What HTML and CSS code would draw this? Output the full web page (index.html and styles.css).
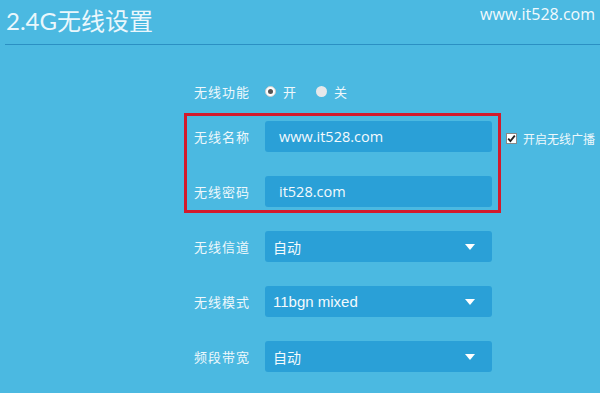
FILE: index.html
```html
<!DOCTYPE html>
<html lang="zh-CN">
<head>
  <meta charset="UTF-8">
  <title>2.4G无线设置</title>
  <link rel="stylesheet" href="styles.css">
</head>
<body>
  <div class="header">
    <h1 class="title">2.4G无线设置</h1>
    <span class="site">www.it528.com</span>
  </div>

  <div class="form">
    <!-- switch -->
    <div class="row row-switch">
      <label class="label">无线功能</label>
      <div class="radios">
        <span class="radio checked"></span><span class="radio-text">开</span>
        <span class="radio"></span><span class="radio-text">关</span>
      </div>
    </div>

    <!-- name & password, highlighted -->
    <div class="highlight-wrap">
      <div class="highlight">
        <div class="row">
          <label class="label">无线名称</label>
          <div class="field text">www.it528.com</div>
        </div>
        <div class="row">
          <label class="label">无线密码</label>
          <div class="field text">it528.com</div>
        </div>
      </div>
      <div class="broadcast">
        <span class="checkbox">
          <svg width="9" height="9" viewBox="0 0 9 9"><path d="M1.2 4.6 L3.4 7 L7.8 1.6" fill="none" stroke="#222" stroke-width="1.8"/></svg>
        </span>
        <span>开启无线广播</span>
      </div>
    </div>

    <!-- selects -->
    <div class="selects">
      <div class="row">
        <label class="label">无线信道</label>
        <div class="field select"><span>自动</span><i class="arrow"></i></div>
      </div>
      <div class="row">
        <label class="label">无线模式</label>
        <div class="field select"><span class="latin">11bgn mixed</span><i class="arrow"></i></div>
      </div>
      <div class="row">
        <label class="label">频段带宽</label>
        <div class="field select"><span>自动</span><i class="arrow"></i></div>
      </div>
    </div>
  </div>
</body>
</html>
```

FILE: styles.css
```css
/* --- Base --- */
*{box-sizing:border-box;margin:0;padding:0}
body{background:#4bb9e1;color:#eef8fc;font-family:"Noto Sans CJK SC",sans-serif;width:600px;height:393px;overflow:hidden}

/* --- Header --- */
.header{display:flex;justify-content:space-between;align-items:flex-start;height:45px;margin-left:5px;border-bottom:1px solid #2b90c3}
.title{font-family:Lato,"Noto Sans CJK SC",sans-serif;font-weight:400;font-size:24px;line-height:24px;margin:9px 0 0 1px;color:#eaf7fc}
.site{font-family:"Open Sans",sans-serif;font-size:16px;line-height:20px;margin:4px 5px 0 0;color:#f2fafd}

/* --- Form --- */
.form{margin-left:184px;padding-top:33px}
.row{display:flex;align-items:center}
.label{width:81px;padding-left:10px;font-size:13px;letter-spacing:1px;color:#eef8fc}
.field{width:227px;height:31px;border-radius:3px;background:#2aa0d7;display:flex;align-items:center;color:#f3fafd}

/* --- Radios --- */
.row-switch{height:26px}
.radios{display:flex;align-items:center;font-size:13px}
.radio{width:11px;height:11px;border-radius:50%;background:#e6e8ea;margin-right:7px}
.radio.checked{background:#fff;border:1px solid #ccc;position:relative}
.radio.checked::after{content:"";position:absolute;left:2px;top:2px;width:5px;height:5px;border-radius:50%;background:#555}
.radio-text{margin-right:20px}

/* --- Highlighted block --- */
.highlight-wrap{display:flex;align-items:flex-start;margin-top:9px}
.highlight{width:317px;height:100px;border:3px solid #d31a2c;padding-top:5px;display:grid;gap:24px;align-content:start}
.highlight .label{width:78px;padding-left:7px}
.field.text{font-family:"Open Sans",sans-serif;font-size:14.5px;padding-left:14px}
.broadcast{display:flex;align-items:center;gap:6px;margin:17px 0 0 5px;font-size:12px}
.checkbox{width:11px;height:11px;background:#fff;border:1px solid #888;display:flex;align-items:center;justify-content:center}

/* --- Selects --- */
.selects{display:grid;gap:24px;margin-top:18px}
.field.select{justify-content:space-between;padding:0 17px 0 8px;font-size:14px}
.latin{font-family:"Liberation Sans",sans-serif;font-size:15px}
.arrow{width:0;height:0;border-left:5px solid transparent;border-right:5px solid transparent;border-top:6px solid #fff}
```
